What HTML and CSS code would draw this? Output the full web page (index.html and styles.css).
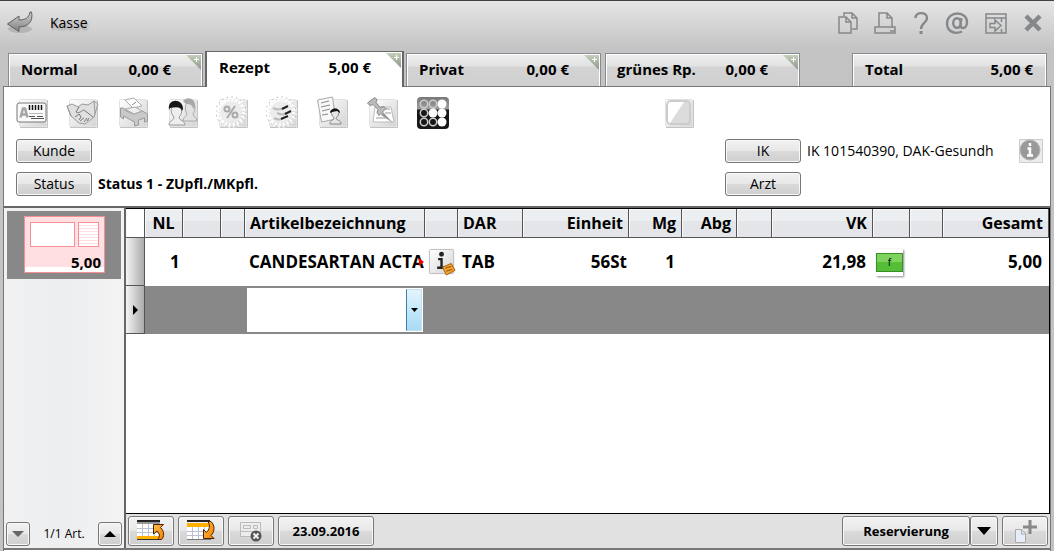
FILE: index.html
```html
<!DOCTYPE html>
<html lang="de">
<head>
<meta charset="utf-8">
<title>Kasse</title>
<link rel="stylesheet" href="styles.css">
</head>
<body>
<svg class="defs" aria-hidden="true">
  <defs>
    <linearGradient id="silver" x1="0" y1="0" x2="1" y2="1"><stop offset="0" stop-color="#fff"/><stop offset="1" stop-color="#d4d4d4"/></linearGradient>
    <linearGradient id="arrow" x1="0" y1="0" x2="0" y2="1"><stop offset="0" stop-color="#d2d2d2"/><stop offset="1" stop-color="#808080"/></linearGradient>
    <linearGradient id="dark" x1="0" y1="0" x2="0" y2="1"><stop offset="0" stop-color="#777"/><stop offset=".38" stop-color="#a0a0a0"/><stop offset=".4" stop-color="#161616"/><stop offset="1" stop-color="#161616"/></linearGradient>
    <linearGradient id="orange" x1="0" y1="0" x2="1" y2="1"><stop offset="0" stop-color="#ffbd4a"/><stop offset="1" stop-color="#f58000"/></linearGradient>
    <g id="tile"><rect x="3.500" y="3.500" width="27" height="27" rx="1" fill="url(#silver)" stroke="#e2e2e2"/><path d="M4 31.500H31.500V4" fill="none" stroke="#c4c4c4"/></g>
    <g id="burst"><circle cx="15" cy="16" r="13.500" fill="none" stroke="#fff" stroke-width="5" stroke-dasharray="2.200 2.040"/><circle cx="15" cy="16" r="15" fill="none" stroke="#9a9a9a" stroke-width="1" stroke-dasharray="1.200 3.512"/><circle cx="15" cy="16" r="10.500" fill="#ececec"/></g>
  </defs>
</svg>

<header class="titlebar">
  <button class="plain back" aria-label="Zurück">
    <svg width="30" height="26" viewBox="0 0 30 26"><ellipse cx="14" cy="19" rx="12" ry="4" fill="#999" opacity=".5"/><path d="M1.500 14 13 6v4c6 0 10-2 11-8h1.500c2 9-3 15-12.500 15v4.500z" fill="url(#arrow)" stroke="#5f5f5f" stroke-linejoin="round"/></svg>
  </button>
  <h1>Kasse</h1>
  <div class="window-tools">
    <button class="plain" aria-label="Kopieren"><svg width="20" height="24" viewBox="0 0 20 24"><path d="M6 5V2h8l5 5v11h-5M14 2v5h5M1 6h7l5 5v11H1zM8 6v5h5"/></svg></button>
    <button class="plain" aria-label="Drucken"><svg width="24" height="24" viewBox="0 0 24 24"><path d="M6 16V2h8l5 5v9M14 2v5h5M2 16h20v6H2zM17 20h5"/></svg></button>
    <button class="plain" aria-label="Hilfe"><svg width="18" height="24" viewBox="0 0 18 24"><path d="M3.500 7C3 .5 15 .5 15 7c0 5-6 5-6 11" stroke-width="2.400"/><path d="M9 20v3" stroke-width="3"/></svg></button>
    <button class="plain" aria-label="Nachricht"><svg width="24" height="24" viewBox="0 0 24 24"><path d="M17 20.500C9 24 2 20 2 12.500 2 6 7 2.500 12.500 2.500S22 6 22 11c0 4-2 6-4 6-3 0-3-2-1.500-10" stroke-width="2.400"/><ellipse cx="12" cy="12" rx="3.800" ry="4.800" stroke-width="2.400"/></svg></button>
    <button class="plain" aria-label="Fenster wechseln"><svg width="24" height="24" viewBox="0 0 24 24"><path d="M2 3h20v19H2zM2 7h20M17.500 7v4M17.500 18v4M6 12.500h5V9l6 5.500-6 5.500v-3.500H6z"/></svg></button>
    <button class="plain" aria-label="Schließen"><svg width="20" height="24" viewBox="0 0 20 24"><path d="m3 5 14 14M17 5 3 19" stroke-width="4.500"/></svg></button>
  </div>
</header>

<nav class="tabs" aria-label="Vorgänge">
  <button class="tab"><span>Normal</span><span>0,00 €</span><i class="corner"></i></button>
  <button class="tab active" aria-current="page"><span>Rezept</span><span>5,00 €</span><i class="corner"></i></button>
  <button class="tab"><span>Privat</span><span>0,00 €</span><i class="corner"></i></button>
  <button class="tab spaced"><span>grünes Rp.</span><span>0,00 €</span><i class="corner"></i></button>
  <button class="tab total"><span>Total</span><span>5,00 €</span></button>
</nav>

<main class="panel">
  <section class="details">
    <div class="icons">
      <button class="plain" aria-label="Kundenkarte"><svg viewBox="0 0 34 34"><use href="#tile"/><rect x="1" y="7" width="29" height="19" rx="2" fill="#fafafa" stroke="#777"/><path d="M4.500 21.500 7 12.500h2l2.500 9M5 18.500h6" fill="none" stroke="#a5a5a5" stroke-width="2.500"/><path d="M13.500 9v5M16.500 9v5M19.500 9v5M22.500 9v5M25.500 9v5" stroke="#111" stroke-width="1.500"/><path d="M13 17.500h14" stroke="#bbb"/><path d="M13 20.500h6M21 20.500h6M15 22.500h13" stroke="#555"/></svg></button>
      <button class="plain" aria-label="Vereinbarung"><svg viewBox="0 0 34 34"><use href="#tile"/><path d="m1 10 5-2 6 3 4-3 6 1 6-4 4 3-4 13-9 7-6-1-8-7z" fill="#e0e0e0" stroke="#999"/><path d="m13 11-3 5c4 2 6-2 8-2l9 7M9 21l4-3 2 3-2 3M14 25l4-3M18 26l3-4M21 25l2-3" fill="none" stroke="#777"/><path d="m1 10 4 10M28 5l1 13" stroke="#999"/></svg></button>
      <button class="plain" aria-label="Klinik"><svg viewBox="0 0 34 34"><use href="#tile"/><path d="m9 4 9-2 8 8-9 2z" fill="#fff" stroke="#aaa"/><path d="m16 9 4-3" stroke="#888"/><path d="M4.500 12v9l3 2v-3l11 6v4l4-1v-5l6-2v4l3-1v-7l-5-3-9 3-9-4-1-2z" fill="#c9c9c9" stroke="#999"/><path d="m9 13 10-2 7 4-8 3z" fill="#eee" stroke="#aaa"/></svg></button>
      <button class="plain" aria-label="Personen"><svg viewBox="0 0 34 34"><use href="#tile"/><path d="M17 25c0-4 3-4 4-7-3-5-2-12 3-12 6 0 6 8 3 12 0 3 4 3 4 7z" fill="#e2e2e2" stroke="#aaa"/><path d="M17 5c4-5 13-3 12 6l-2 2c0-4-3-5-7-5z" fill="#a8a8a8"/><path d="M3 29c0-5 5-4 5-8-4-4-4-12 2-12 7 0 7 9 3 12 0 4 6 3 6 8z" fill="#eee" stroke="#999"/><path d="M3 14C1 2 17 2 17 13l-1 2c-1-5-7-4-12-3z" fill="#171717"/></svg></button>
      <button class="plain" aria-label="Rabatt"><svg viewBox="0 0 34 34"><use href="#tile"/><use href="#burst"/><path d="M19 10 11 22" stroke="#aaa" stroke-width="2"/><circle cx="11" cy="13" r="2.500" fill="none" stroke="#aaa" stroke-width="2"/><circle cx="19" cy="19" r="2.500" fill="none" stroke="#aaa" stroke-width="2"/></svg></button>
      <button class="plain" aria-label="Zuzahlung"><svg viewBox="0 0 34 34"><use href="#tile"/><use href="#burst"/><path d="M7 12c4 2 7 2 10 0M11 17c4 2 7 2 9 0M8 22c4 2 7 2 9 0" fill="none" stroke="#bbb" stroke-width="2"/><path d="m16 13 6-3M19 18l6-3M15 23l7-3" stroke="#222" stroke-width="2"/></svg></button>
      <button class="plain" aria-label="Kundendaten"><svg viewBox="0 0 34 34"><use href="#tile"/><path d="m1.500 4 15-3 3 22-14 3z" fill="#f8f8f8" stroke="#aaa"/><path d="m5 7 8-2M5 11l9-2M6 15l8-2M6 19l6-1" stroke="#888"/><path d="M14 28c0-5 4-3 4-6-4-4-3-9 1-9 5 0 5 6 1 9 0 3 5 1 5 6z" fill="#e5e5e5" stroke="#888"/><path d="M14 17c0-6 10-6 10 0l-3-2-5 1z" fill="#111"/></svg></button>
      <button class="plain" aria-label="Notiz"><svg viewBox="0 0 34 34"><use href="#tile"/><path d="M9 11h16l3 15H7z" fill="#fff" stroke="#bbb"/><path d="M17 13h7M19 17h6M10 22h11" stroke="#999"/><path d="M17 16 27 27 15 19z" fill="#999"/><path d="M1.500 7 9 1.500l2 2-1 3 4 5 4-1 2 2-7 7-2-3 1-3-5-5-3 1z" fill="#bbb" stroke="#888"/></svg></button>
      <button class="plain" aria-label="Tastenfeld"><svg viewBox="0 0 34 34"><rect x="1" y="1" width="32" height="32" rx="4" fill="url(#dark)"/><g fill="none" stroke="#ccc" stroke-width="1.500"><circle cx="8" cy="8" r="3.700"/><circle cx="17" cy="8" r="3.700"/><circle cx="8" cy="17" r="3.700"/><circle cx="8" cy="26" r="3.700"/><circle cx="17" cy="26" r="3.700"/></g><g fill="#fff"><circle cx="26" cy="8" r="4.500"/><circle cx="17" cy="17" r="4.500"/><circle cx="26" cy="17" r="4.500"/><circle cx="26" cy="26" r="4.500"/></g></svg></button>
      <button class="plain blank" aria-label="Leeres Feld"><svg viewBox="0 0 34 34"><use href="#tile"/><rect x="5" y="5" width="23" height="23" rx="4" fill="#dcdcdc" stroke="#ccc" stroke-width="2"/><path d="M9 6h13L8 27c-1 0-2-1-2-3V9c0-2 1-3 3-3z" fill="#fff"/></svg></button>
    </div>
    <div class="fields">
      <div class="field"><button class="btn">Kunde</button></div>
      <div class="field insurer"><button class="btn">IK</button><span>IK 101540390, DAK-Gesundh</span>
        <button class="plain info" aria-label="Information"><svg viewBox="0 0 26 26"><path d="M1.500 1.500h23v23h-23z" fill="#ececec" stroke="#ccc"/><circle cx="12" cy="12" r="10" fill="#999" stroke="#b5b5b5"/><path d="M12 5v3M9.500 10.500h2.500v7M9 17.500h6" stroke="#fff" stroke-width="2.500" fill="none"/></svg></button></div>
      <div class="field"><button class="btn">Status</button><strong>Status 1 - ZUpfl./MKpfl.</strong></div>
      <div class="field"><button class="btn">Arzt</button></div>
    </div>
  </section>

  <div class="work">
    <aside class="sidebar">
      <button class="recipe-card">
        <svg viewBox="0 0 81 57" aria-hidden="true"><rect x=".5" y=".5" width="80" height="56" fill="#ffdfe1" stroke="#f58f98"/><path d="M1 51h79v5H1z" fill="#fff"/><rect x="6.500" y="6.500" width="44" height="24" fill="#fff" stroke="#f58f98"/><rect x="54.500" y="6.500" width="20" height="24" fill="#fff" stroke="#f58f98"/><path d="M55 9.500h19M55 12.500h19M55 15.500h19M55 18.500h19M55 21.500h19M55 24.500h19M55 27.500h19" stroke="#ffdfe1"/></svg>
        <span>5,00</span>
      </button>
      <div class="pager">
        <button class="btn arrow" aria-label="Nächster"><svg width="12" height="6" viewBox="0 0 12 6"><path d="M0 0h12L6 6z" fill="#666"/></svg></button>
        <span>1/1 Art.</span>
        <button class="btn arrow" aria-label="Vorheriger"><svg width="12" height="6" viewBox="0 0 12 6"><path d="M0 6h12L6 0z"/></svg></button>
      </div>
    </aside>

    <section class="content">
      <div class="grid">
        <table>
          <colgroup><col class="c-mark"><col class="c-nl"><col class="c-nl"><col class="c-slim"><col><col class="c-icon"><col class="c-dar"><col class="c-unit"><col class="c-mg"><col class="c-abg"><col class="c-gap"><col class="c-vk"><col class="c-flag"><col class="c-icon"><col class="c-unit"></colgroup>
          <thead><tr><th class="mark"></th><th class="mid">NL</th><th></th><th></th><th>Artikelbezeichnung</th><th></th><th>DAR</th><th class="num">Einheit</th><th class="num">Mg</th><th class="num">Abg</th><th></th><th class="num">VK</th><th></th><th></th><th class="num">Gesamt</th></tr></thead>
          <tbody>
            <tr><td class="mark"></td><td class="nl">1</td><td></td><td></td><td class="article"><div>CANDESARTAN ACTA<i class="more"></i></div></td>
              <td class="pic"><svg width="29" height="29" viewBox="0 0 30 30" role="img" aria-label="Artikelinfo"><rect x="1.500" y="1.500" width="25" height="25" rx="1" fill="url(#silver)" stroke="#bbb"/><path d="M10.500 11.500h3.500v9M9.500 20.500h8" fill="none" stroke="#222" stroke-width="2.500"/><circle cx="14" cy="6.500" r="2.500" fill="#222"/><path d="m15 20 9-4 4 7-9 5z" fill="#f2a336" stroke="#a85a08"/><path d="m18 21 6-2M19 24l6-2" stroke="#8a4a00"/></svg></td>
              <td>TAB</td><td class="num unit">56St</td><td class="num">1</td><td></td><td></td><td class="num">21,98</td>
              <td class="pic"><span class="flag">f</span></td><td></td><td class="num">5,00</td></tr>
            <tr class="current"><td class="mark"><svg width="5" height="10" viewBox="0 0 5 10"><path d="M0 0v10l5-5z"/></svg></td><td></td><td></td><td></td>
              <td class="entry"><div class="combo"><input type="text" aria-label="Artikelbezeichnung"><button aria-label="Artikelliste öffnen"><svg width="7" height="4" viewBox="0 0 7 4"><path d="M0 0h7L3.500 4z"/></svg></button></div></td>
              <td></td><td></td><td></td><td></td><td></td><td></td><td></td><td></td><td></td><td></td></tr>
          </tbody>
        </table>
      </div>
      <footer class="actions">
        <button class="btn tool" aria-label="Zeile nach oben"><svg width="30" height="22" viewBox="0 0 30 22"><path d="M1 3h23v16H1z" fill="#fff"/><path d="M1 1h23" stroke="#222" stroke-width="2"/><path d="M1 3h23" stroke="#999" stroke-width="2"/><path d="M1 8.500h23M1 12.500h23M6.500 4v14M12.500 4v14M18.500 4v14" stroke="#b9c1d4"/><path d="M1 16h23v3H1z" fill="#ffb000"/><path d="M1 19.500h24" stroke="#333"/><path d="M17.500 4.500h10l-3 3c4 4 4 9 1 12h-4c3-3 2-6-.5-8.500l-3.500 3z" fill="url(#orange)" stroke="#4b2100"/></svg></button>
        <button class="btn tool" aria-label="Zeile nach unten"><svg width="30" height="22" viewBox="0 0 30 22"><path d="M1 3h23v16H1z" fill="#fff"/><path d="M1 1h23" stroke="#222" stroke-width="2"/><path d="M1 3h23v4H1z" fill="#ffb000"/><path d="M1 11.500h23M1 15.500h23M6.500 7v12M12.500 7v12M18.500 7v12" stroke="#b9c1d4"/><path d="M1 19.500h24" stroke="#777"/><path d="M22 1.500h3c4 4 4 10 0 14l3 3H17.500v-9l3 3c3-3 4-7 1.500-11z" fill="url(#orange)" stroke="#4b2100"/></svg></button>
        <button class="btn tool" aria-label="Zeile löschen"><svg width="30" height="22" viewBox="0 0 30 22"><path d="M4.500 2.500h20v14h-20zM7.500 5.500h7v3h-7zM17.500 5.500h4v3h-4zM5 11.500h19" fill="#ededed" stroke="#bbb"/><circle cx="20" cy="16" r="5.500" fill="#555"/><path d="m17.500 13.500 5 5M22.500 13.500l-5 5" stroke="#eee" stroke-width="2"/></svg></button>
        <button class="btn date">23.09.2016</button>
        <div class="reserve">
          <button class="btn">Reservierung</button><button class="btn drop" aria-label="Weitere Aktionen"><svg width="14" height="8" viewBox="0 0 14 8"><path d="M0 0h14L7 8z"/></svg></button>
        </div>
        <button class="btn tool" aria-label="Neuer Vorgang"><svg width="26" height="26" viewBox="0 0 26 26"><path d="M3.500 11.500h6l4 4v9h-10z" fill="#e6ecf8" stroke="#aaa"/><path d="M9.500 12v4h4" fill="none" stroke="#aaa"/><path d="M18 2v14M11 9h14" stroke="#888" stroke-width="3"/></svg></button>
      </footer>
    </section>
  </div>
</main>
</body>
</html>
```
FILE: styles.css
```css
* { box-sizing: border-box; }
body {
  margin: 0;
  height: 100vh;
  display: flex;
  flex-direction: column;
  overflow: hidden;
  background: linear-gradient(#e6e6e6, #c3c3c3 50px);
  border-top: 1px solid #423f42;
  color: #000;
  font: 14px/20px "Open Sans", "Noto Sans", sans-serif;
}
button, input { font: inherit; color: inherit; }
.defs { position: absolute; width: 0; height: 0; }
svg { display: block; flex: none; }
.plain { padding: 0; border: 0; background: none; }

.titlebar { display: flex; align-items: center; height: 44px; padding: 0 11px 0 6px; flex: none; }
h1 { margin: 0 0 0 14px; font-size: 14px; font-weight: 400; text-shadow: 1px 2px 2px #999; }
.window-tools { display: flex; align-items: center; gap: 15px; margin-left: auto; }
.window-tools svg { fill: none; stroke: #85888a; stroke-width: 1.5; }

.tabs { display: flex; align-items: flex-end; gap: 2px; height: 41px; padding: 0 7px 0 8px; flex: none; }
.tab {
  position: relative;
  display: flex;
  justify-content: space-between;
  flex: 0 1 195px;
  height: 33px;
  padding: 5px 31px 0 12px;
  border: 1px solid #888a94;
  border-bottom: 0;
  background: linear-gradient(#eee, #e2e2e2 38%, #d4d4d4 40%, #cfcfcf);
  box-shadow: inset 1px 1px #fff, inset -1px 0 #fff;
  font-size: 15px;
  font-weight: 700;
  line-height: 20px;
  white-space: nowrap;
}
.tab.active {
  flex-basis: 199px;
  height: 36px;
  margin-bottom: -1px;
  border: 2px solid #666;
  border-bottom: 0;
  border-top-width: 1px;
  background: #fff;
  z-index: 1;
}
.tab.spaced { margin-left: 2px; padding-left: 11px; }
.tab.total { margin-left: auto; padding-right: 13px; }
.corner {
  position: absolute;
  top: 1px;
  right: 1px;
  width: 15px;
  height: 15px;
  background: linear-gradient(#c3cfb9, #8e968a);
  clip-path: polygon(0 0, 100% 0, 100% 100%);
}
.corner::before, .corner::after { content: ""; position: absolute; background: #fff; }
.corner::before { top: 4px; right: 2px; width: 5px; height: 1px; }
.corner::after { top: 2px; right: 4px; width: 1px; height: 5px; }

.panel {
  flex: 1;
  min-height: 0;
  display: flex;
  flex-direction: column;
  margin: 0 3px 0 3px;
  border: 1px solid #777;
  border-bottom: 0;
  background: #fff;
}
.details { padding: 9px 6px 10px 12px; border-bottom: 2px solid #666; }
.icons { display: flex; gap: 16px; height: 34px; }
.icons svg { width: 34px; height: 34px; }
.icons .blank { margin-left: 196px; }
.fields {
  display: grid;
  grid-template-columns: minmax(0, 1fr) 319px;
  gap: 9px 6px;
  margin-top: 9px;
}
.field { display: flex; align-items: center; gap: 6px; height: 24px; white-space: nowrap; }
.info { margin-left: auto; }
.info svg { width: 26px; height: 26px; }
.btn {
  display: flex;
  align-items: center;
  justify-content: center;
  padding: 0;
  border: 1px solid #777;
  border-radius: 3px;
  background: linear-gradient(#f2f2f2, #e8e8e8 48%, #dadada 50%, #cfcfcf);
  box-shadow: inset 0 0 0 1px #f8f8f8;
}
.field .btn { width: 76px; height: 24px; }

.work { display: flex; flex: 1; min-height: 0; margin-bottom: 1px; border-bottom: 2px solid #777; }
.sidebar {
  display: flex;
  flex-direction: column;
  justify-content: space-between;
  width: 122px;
  padding: 3px 2px 2px 2px;
  border-right: 2px solid #666;
  background: linear-gradient(90deg, #f1f1f2, #eceef0, #f3f3f3);
}
.recipe-card {
  display: flex;
  justify-content: center;
  position: relative;
  width: 114px;
  height: 68px;
  margin-left: 1px;
  padding: 5px 0;
  border: 0;
  background: #888;
}
.recipe-card svg { width: 81px; height: 57px; }
.recipe-card span { position: absolute; right: 20px; bottom: 7px; font-size: 15px; font-weight: 700; line-height: 20px; }
.pager { display: flex; align-items: center; justify-content: space-between; font-size: 12px; }
.arrow { width: 24px; height: 24px; }

.content { flex: 1; min-width: 0; display: flex; flex-direction: column; background: #e1e1e1; }
.grid { flex: 1; min-height: 0; border: 1px solid #000; border-left: 0; background: #fff; }
table { width: 100%; border-collapse: separate; border-spacing: 0; table-layout: fixed; font-weight: 700; }
.c-mark { width: 19px; }
.c-nl { width: 38px; }
.c-slim { width: 24px; }
.c-icon { width: 33px; }
.c-dar { width: 65px; }
.c-unit { width: 106px; }
.c-mg { width: 53px; }
.c-abg { width: 55px; }
.c-gap { width: 35px; }
.c-vk { width: 101px; }
.c-flag { width: 37px; }
th, td { padding: 0 4px; text-align: left; white-space: nowrap; }
th {
  height: 29px;
  padding: 0 5px;
  border-right: 1px solid #555;
  border-bottom: 1px solid #555;
  background: linear-gradient(#eceff1 42%, #e3e5e8 44%);
  box-shadow: inset 1px 1px #f8f8f8;
  font-size: 16px;
}
td { height: 48px; font-size: 17px; }
th.mark { background: #fff; }
td.mark { padding: 0 0 0 7px; border-right: 1px solid #555; border-bottom: 1px solid #555; background: linear-gradient(90deg, #f4f4f4, #aaa); }
.num { text-align: right; }
td.num { padding-right: 7px; }
td.unit { padding-right: 2px; }
th.mid { text-align: center; }
td.nl { padding-left: 25px; }
td.pic { padding: 0 3px; }
.article div { position: relative; overflow: hidden; width: 100%; }
td.article { padding-right: 1px; }
.more { position: absolute; top: 6px; right: 0; border: 4px solid transparent; border-left: 5px solid #e00; border-right: 0; }
.flag {
  display: block;
  width: 27px;
  height: 27px;
  border: solid #fff;
  border-width: 4px 0;
  background: linear-gradient(#7cd45f 48%, #55bd36 50%);
  box-shadow: inset 0 0 0 1px #3b8e25, 1px 1px 2px #888;
  font-size: 10px;
  font-weight: 400;
  line-height: 19px;
  text-align: center;
}
.current td { background-color: #888; }
td.entry { padding: 0 2px; }
.combo { display: flex; height: 44px; padding: 1px; background: #fff; }
.combo input { flex: 1; min-width: 0; padding: 0 4px; border: 0; background: #fff; }
.combo button {
  display: flex;
  align-items: center;
  justify-content: center;
  width: 16px;
  padding: 0;
  border: 1px solid #c4dff0;
  border-left-color: #3c7fb1;
  background: linear-gradient(#e5f4fc, #c4e8fa 50%, #a9dbf5);
}

.actions { display: flex; align-items: center; gap: 4px; height: 34px; padding: 0 2px 1px; }
.actions .btn { height: 30px; }
.tool { width: 46px; }
.date { width: 96px; }
.date, .reserve { font-size: 13px; font-weight: 700; }
.reserve { display: flex; margin-left: auto; }
.reserve .btn { width: 128px; }
.reserve .drop { width: 28px; }
```
